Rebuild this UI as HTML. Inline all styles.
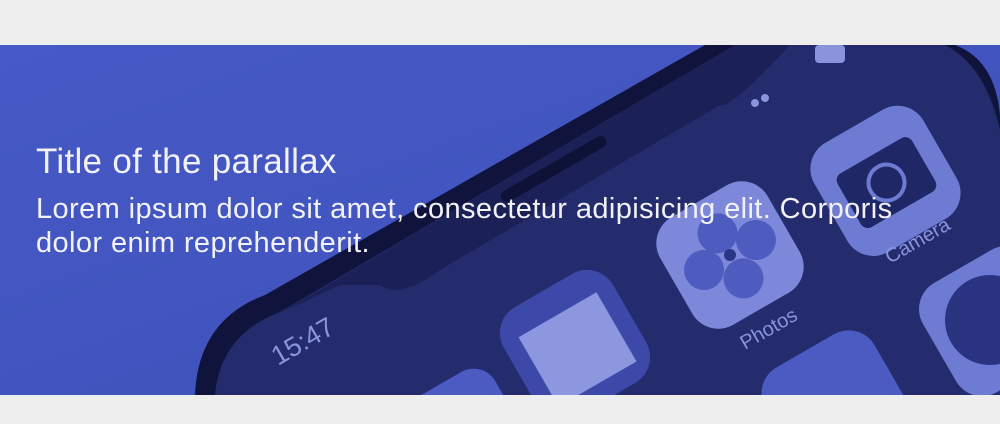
<!DOCTYPE html>
<html><head><meta charset="utf-8"><style>
html,body{margin:0;padding:0;background:#eeeeee;width:1000px;height:424px;overflow:hidden}
.band{position:absolute;left:0;top:45px;width:1000px;height:350px;overflow:hidden;background:#4457c3}
svg{position:absolute;left:0;top:0;display:block}
.txt{position:absolute;left:36px;top:95px;color:#f2f2f6;font-family:"Liberation Sans",sans-serif;width:905px}
h1{margin:0;font-weight:400;font-size:35px;line-height:44px;letter-spacing:0.3px;white-space:nowrap}
p{margin:8px 0 0;font-size:29px;line-height:34px;letter-spacing:0.4px}
</style></head><body>
<div class="band">
<svg width="1000" height="350" viewBox="0 45 1000 350">
<defs><linearGradient id="bg" x1="0" y1="0" x2="1" y2="1"><stop offset="0" stop-color="#4659c6"/><stop offset="1" stop-color="#3d50b8"/></linearGradient></defs>
<rect x="0" y="45" width="1000" height="350" fill="url(#bg)"/>
<path d="M195 395 Q198 320 265 295 L705 45 L955 45 Q995 60 1000 115 L1000 395 Z" fill="#10143c"/>
<path d="M215 395 Q220 335 280 312 L735 45 L945 45 Q985 65 1000 130 L1000 395 Z" fill="#242c6e"/>
<path d="M282 312 L735 45 L790 45 Q730 110 720 105 L440 270 Q400 300 380 285 L340 285 Z" fill="#1b2157"/>
<g transform="rotate(-30 560 170)">
<rect x="495" y="160" width="120" height="12" rx="6" fill="#0e1236"/>
</g>
<g transform="rotate(-30 730 255)"><rect x="668" y="193" width="124" height="124" rx="30" fill="#7d88da"/>
<g fill="#4a58bd" opacity="0.9"><circle cx="730" cy="230" r="20"/><circle cx="760" cy="255" r="20"/><circle cx="730" cy="282" r="20"/><circle cx="700" cy="255" r="20"/></g>
<circle cx="730" cy="255" r="6" fill="#2b3585"/></g>
<g transform="rotate(-30 885 180)"><rect x="822" y="118" width="126" height="126" rx="30" fill="#6e7bd2"/>
<rect x="842" y="152" width="86" height="62" rx="8" fill="#1f2766"/><circle cx="885" cy="183" r="18" fill="none" stroke="#6e7bd2" stroke-width="4"/></g>
<g transform="rotate(-30 575 345)"><rect x="512" y="282" width="126" height="126" rx="30" fill="#3c49a8"/>
<rect x="530" y="310" width="90" height="80" fill="#8d97e0"/></g>
<g transform="rotate(-30 990 320)"><rect x="930" y="260" width="126" height="126" rx="30" fill="#6e7bd2"/><circle cx="990" cy="320" r="45" fill="#2a3380"/></g>
<g transform="rotate(-30 830 400)"><rect x="770" y="345" width="126" height="126" rx="30" fill="#4c5bc2"/></g>
<g transform="rotate(-30 460 390)"><rect x="395" y="375" width="100" height="100" rx="25" fill="#4c5bc2"/></g>
<g fill="#8a94dd" font-family="Liberation Sans,sans-serif">
<text x="278" y="366" font-size="27" transform="rotate(-30 278 366)">15:47</text>
<text x="745" y="350" font-size="20" transform="rotate(-30 745 350)">Photos</text>
<text x="890" y="264" font-size="20" transform="rotate(-30 890 264)">Camera</text>
</g>
<g fill="#8a94dd"><circle cx="755" cy="103" r="4"/><circle cx="765" cy="98" r="4"/><rect x="815" y="45" width="30" height="18" rx="4"/></g>
</svg>
<div class="txt"><h1>Title of the parallax</h1><p>Lorem ipsum dolor sit amet, consectetur adipisicing elit. Corporis dolor enim reprehenderit.</p></div>
</div>
</body></html>
